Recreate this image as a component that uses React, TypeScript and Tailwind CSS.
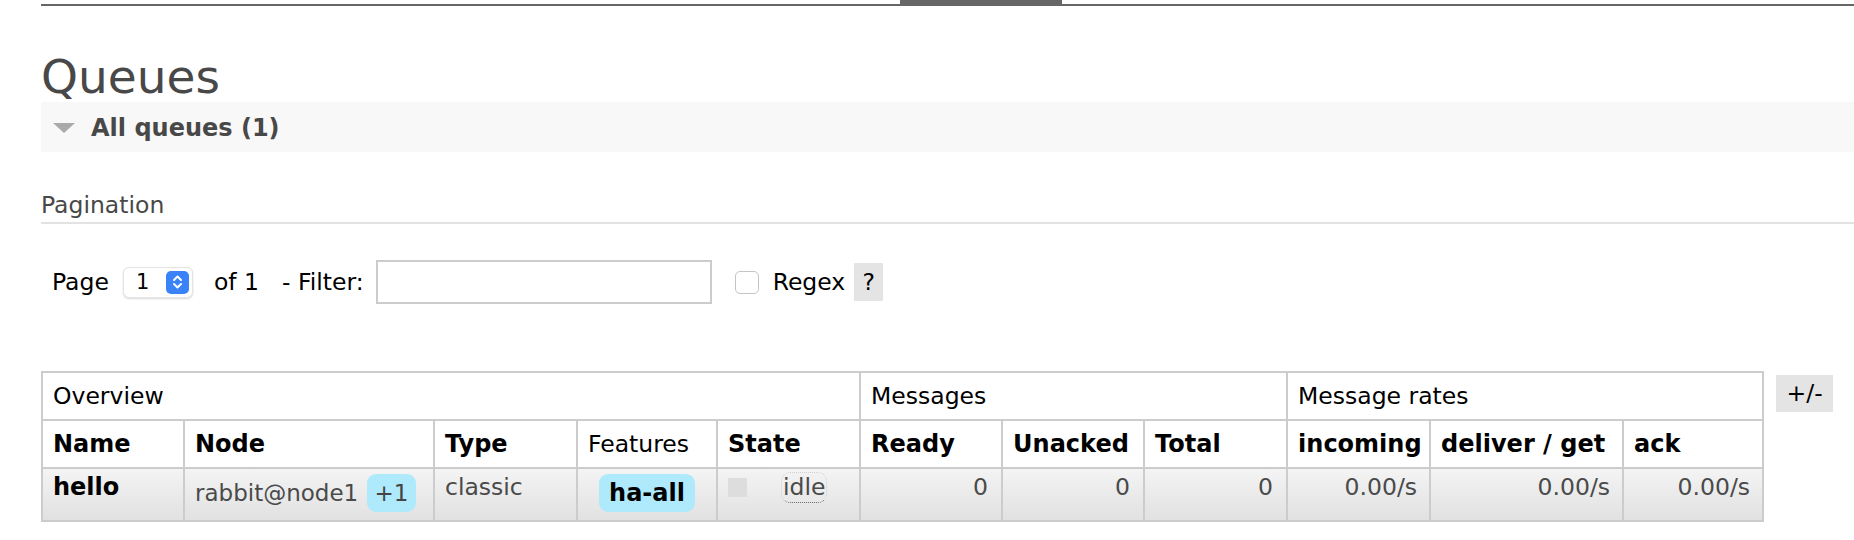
import React from "react";

const cols = [142, 250, 143, 140, 143, 142, 142, 143, 143, 193, 140];

function Badge({ children, bold, px }: { children: React.ReactNode; bold?: boolean; px: string }) {
  return (
    <span
      className={`inline-block rounded-[9px] bg-[#aeeafb] py-[6px] leading-[26px] ${px} ${
        bold ? "font-bold text-black" : "text-[#444]"
      }`}
    >
      {children}
    </span>
  );
}

export default function App() {
  const th = "border-2 border-[#cccccc] px-[10px] py-[10px] leading-[26px] text-left align-middle whitespace-nowrap";
  const td = "border-2 border-[#cccccc] px-[10px] pt-[5px] pb-[8px] leading-[26px] align-top whitespace-nowrap";
  return (
    <div className="min-h-[540px] bg-white pl-[41px] text-[23.5px] text-black font-['DejaVu_Sans',Verdana,sans-serif]">
      {/* top bar */}
      <div className="flex h-[6px] items-end">
        <div className="h-[2px] w-[859px] bg-[#666666]" />
        <div className="h-[6px] w-[162px] bg-[#666666]" />
        <div className="h-[2px] flex-1 bg-[#666666]" />
      </div>

      <h1 className="mt-[47px] text-[47px] leading-[47px] font-normal text-[#484848]">Queues</h1>

      <div className="mt-[2px] flex h-[50px] items-center bg-[#f8f8f8] pl-[12px] pt-[2px]">
        <svg width="22" height="10" viewBox="0 0 22 10" className="mr-[16px]">
          <polygon points="0,0 22,0 11,10" fill="#aaaaaa" />
        </svg>
        <span className="text-[24px] font-bold leading-[26px] text-[#484848]">All queues (1)</span>
      </div>

      <div className="mt-[40px] border-b-2 border-[#e2e2e2] pb-[4px] leading-[26px] text-[#484848]">Pagination</div>

      <div className="mt-[36px] flex h-[44px] items-center pl-[11px] leading-[26px]">
        <span>Page</span>
        <div className="ml-[14px] flex h-[31px] w-[70px] items-center justify-between rounded-[6px] border border-[#e4e4e4] bg-white pl-[12px] pr-[3px] shadow-[0_1px_2px_rgba(0,0,0,0.15)]">
          <span className="text-[21px]">1</span>
          <div className="flex h-[23px] w-[23px] items-center justify-center rounded-[5px] bg-[#3a82f7]">
            <svg width="11" height="16" viewBox="0 0 11 16" fill="none" stroke="white" strokeWidth="2" strokeLinecap="round" strokeLinejoin="round">
              <polyline points="2,6 5.5,2.5 9,6" />
              <polyline points="2,10 5.5,13.5 9,10" />
            </svg>
          </div>
        </div>
        <span className="ml-[21px]">of 1</span>
        <span className="ml-[23px]">- Filter:</span>
        <div className="ml-[12px] h-[44px] w-[336px] border-2 border-[#cccccc] bg-white" />
        <div className="ml-[23px] h-[23px] w-[24px] rounded-[5px] border border-[#c4c4c4] bg-white" />
        <span className="ml-[14px]">Regex</span>
        <span className="ml-[9px] flex h-[38px] w-[29px] items-center justify-center bg-[#e4e4e4]">?</span>
      </div>

      <div className="mt-[67px] flex items-start">
        <table className="table-fixed border-collapse" style={{ width: 1721 }}>
          <colgroup>
            {cols.map((w, i) => (
              <col key={i} style={{ width: w }} />
            ))}
          </colgroup>
          <thead>
            <tr>
              <th colSpan={5} className={`${th} font-normal`}>Overview</th>
              <th colSpan={3} className={`${th} font-normal`}>Messages</th>
              <th colSpan={3} className={`${th} font-normal`}>Message rates</th>
            </tr>
            <tr className="text-[24px]">
              <th className={`${th} font-bold`}>Name</th>
              <th className={`${th} font-bold`}>Node</th>
              <th className={`${th} font-bold`}>Type</th>
              <th className={`${th} font-normal text-[23.5px]`}>Features</th>
              <th className={`${th} font-bold`}>State</th>
              <th className={`${th} font-bold`}>Ready</th>
              <th className={`${th} font-bold`}>Unacked</th>
              <th className={`${th} font-bold`}>Total</th>
              <th className={`${th} font-bold`}>incoming</th>
              <th className={`${th} font-bold`}>deliver / get</th>
              <th className={`${th} font-bold`}>ack</th>
            </tr>
          </thead>
          <tbody>
            <tr className="bg-linear-to-b from-[#f4f4f4] to-[#e1e1e1]">
              <td className={`${td} font-bold text-[24px]`}>hello</td>
              <td className={`${td} text-[#4a4a4a] text-[23px]`}>
                rabbit@node1{" "}
                <span className="ml-[1px]">
                  <Badge px="px-[8px]">+1</Badge>
                </span>
              </td>
              <td className={`${td} text-[#4a4a4a]`}>classic</td>
              <td className={`${td} text-center text-[24px]`}>
                <Badge bold px="px-[10px]">ha-all</Badge>
              </td>
              <td className={`${td} text-[#4a4a4a]`}>
                <div className="flex items-start">
                  <div className="mt-[4px] h-[19px] w-[19px] bg-[#dddddd]" />
                  <span className="ml-[34px] mt-[-2px] rounded-[9px] border border-dotted border-[#d0d0d0] border-b-[#666666] px-[1px] leading-[29px]">
                    idle
                  </span>
                </div>
              </td>
              <td className={`${td} text-right text-[#4a4a4a] pr-[13px]`}>0</td>
              <td className={`${td} text-right text-[#4a4a4a] pr-[13px]`}>0</td>
              <td className={`${td} text-right text-[#4a4a4a] pr-[13px]`}>0</td>
              <td className={`${td} text-right text-[#4a4a4a] pr-[12px]`}>0.00/s</td>
              <td className={`${td} text-right text-[#4a4a4a] pr-[12px]`}>0.00/s</td>
              <td className={`${td} text-right text-[#4a4a4a] pr-[12px]`}>0.00/s</td>
            </tr>
          </tbody>
        </table>
        <div className="ml-[12px] mt-[4px] flex h-[37px] w-[57px] items-center justify-center bg-[#e4e4e4]">+/-</div>
      </div>
    </div>
  );
}
